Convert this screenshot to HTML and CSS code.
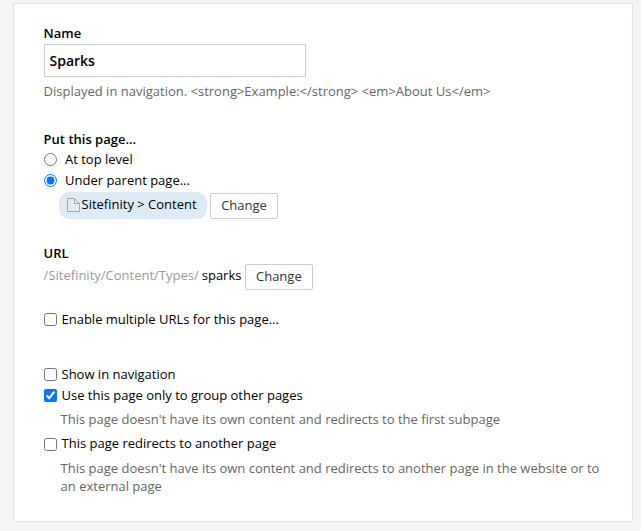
FILE: index.html
```html
<!DOCTYPE html>
<html lang="en">
<head>
<meta charset="utf-8">
<title>Page properties</title>
<link rel="stylesheet" href="styles.css">
</head>
<body>
<main class="panel">
  <section class="name">
    <label class="heading" for="name">Name</label>
    <input class="field" id="name" type="text" value="Sparks">
    <p class="hint">Displayed in navigation. &lt;strong&gt;Example:&lt;/strong&gt; &lt;em&gt;About Us&lt;/em&gt;</p>
  </section>
  <section class="parent">
    <h2 class="heading">Put this page...</h2>
    <label class="option"><input type="radio" name="parent"><span>At top level</span></label>
    <label class="option"><input type="radio" name="parent" checked><span>Under parent page...</span></label>
    <div class="chosen">
      <span class="chip"><svg class="page-icon" width="13" height="15" viewBox="0 0 13 15"><path d="M.5.5h7l5 5v8H.5z" fill="#e5edf1" stroke="#a5a5a5"/><path d="M7.500.5v5h5" fill="none" stroke="#a5a5a5"/></svg>Sitefinity &gt; Content</span>
      <button class="button">Change</button>
    </div>
  </section>
  <section class="url">
    <h2 class="heading">URL</h2>
    <div class="url-row"><span class="path">/Sitefinity/Content/Types/</span><span class="slug">sparks</span><button class="button">Change</button></div>
  </section>
  <label class="option multiple"><input type="checkbox"><span>Enable multiple URLs for this page...</span></label>
  <section class="settings">
    <label class="option"><input type="checkbox"><span>Show in navigation</span></label>
    <label class="option"><input type="checkbox" checked><span>Use this page only to group other pages</span></label>
    <p class="detail">This page doesn't have its own content and redirects to the first subpage</p>
    <label class="option redirect"><input type="checkbox"><span>This page redirects to another page</span></label>
    <p class="detail last">This page doesn't have its own content and redirects to another page in the website or to an external page</p>
  </section>
</main>
</body>
</html>
```

FILE: styles.css
```css
* { box-sizing: border-box; }
body {
  margin: 0;
  padding: 3px 8px 0 13px;
  height: 531px;
  overflow: hidden;
  background: #f4f5f7;
  color: #000;
  font: 13px/18px "Open Sans", sans-serif;
}
.panel {
  height: 519px;
  padding: 20px 30px 0;
  background: #fff;
  border: 1px solid #e0e1e4;
}
.heading { display: block; margin: 0 0 0 -0.4px; font-size: 13px; line-height: 18px; font-weight: 600; }
.field {
  display: block;
  width: 262px;
  height: 33px;
  margin-top: 2px;
  padding: 0 4.5px;
  border: 1px solid #ccc;
  font: 600 14px "Open Sans", sans-serif;
  color: #000;
}
.hint { margin: 5px 0 0 -0.4px; color: #666; }
.parent { margin-top: 30px; }
.option { display: flex; align-items: center; height: 21px; }
.option input { width: 13px; height: 13px; margin: 2px 0 0; }
.option input[type="radio"] + span { margin-left: 8px; }
.option input[type="checkbox"] + span { margin-left: 4.5px; }
.chosen { display: flex; gap: 3px; margin: 2px 0 0 15px; }
.chip {
  display: flex;
  align-items: center;
  width: 148px;
  height: 27px;
  padding: 0 0 3px 8px;
  border-radius: 10px;
  background: #dcebf5;
}
.page-icon { flex: none; margin: 2px 1.5px 0 0; }
.button {
  width: 68px;
  height: 26px;
  padding: 0 0 2px;
  border: 1px solid #ccc;
  border-radius: 2px;
  background: #fff;
  color: #333;
  font: 13px "Open Sans", sans-serif;
}
.chosen .button { margin-top: 1px; }
.url { margin-top: 25px; }
.url-row { display: flex; align-items: flex-start; height: 28px; padding-top: 2px; }
.url-row span { padding-top: 2px; }
.path { margin-left: -0.4px; color: #999; }
.slug { margin: 0 3.4px 0 3px; }
.multiple { margin-top: 18px; }
.settings { margin-top: 34px; }
.detail { margin: 5px 0 4px 16.6px; color: #666; }
.redirect input { margin-top: 4px; }
.last { margin-top: 6px; }
```
